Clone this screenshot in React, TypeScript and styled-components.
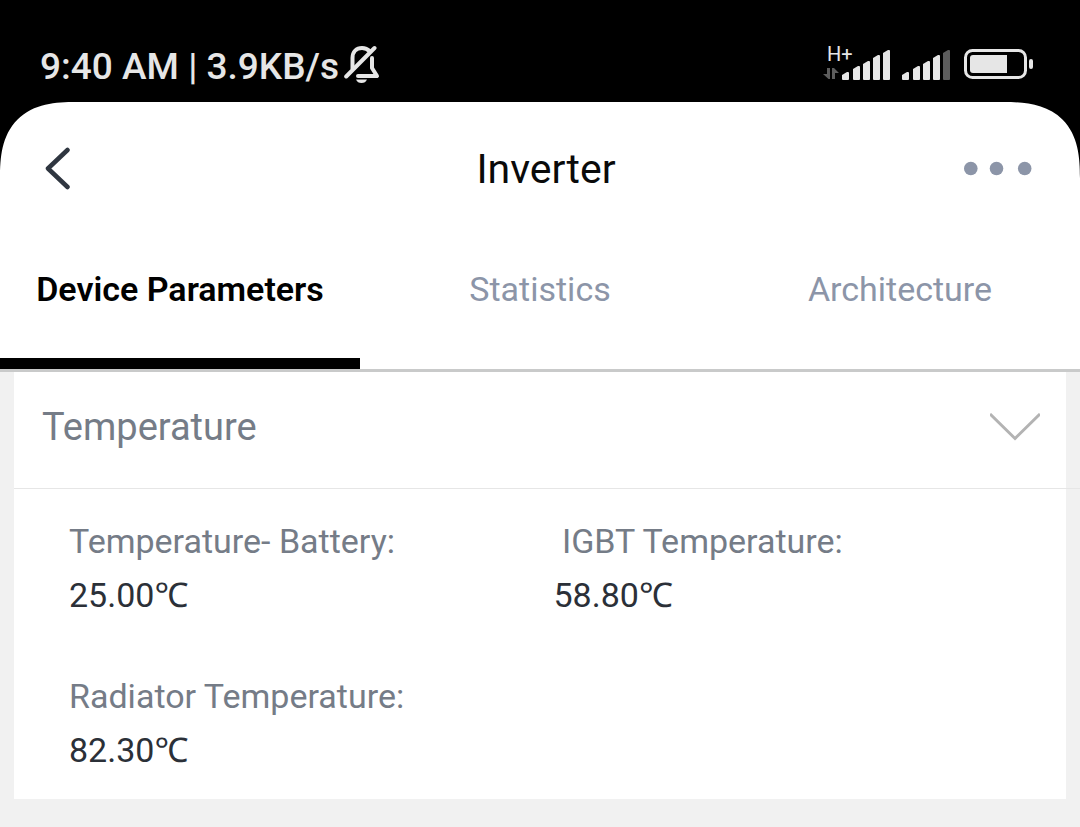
import React, { useState } from "react";
import styled, { createGlobalStyle } from "styled-components";

const GlobalStyle = createGlobalStyle`
  * { box-sizing: border-box; }
  body {
    margin: 0;
    background: #f1f1f1;
    font-family: Roboto, "Noto Sans", sans-serif;
  }
  button {
    font-family: inherit;
    border: 0;
    padding: 0;
    background: none;
    cursor: pointer;
  }
`;

const Screen = styled.div`
  display: flex;
  flex-direction: column;
  min-height: 100vh;
`;

const TopArea = styled.div`
  background: #000;
`;

const StatusBar = styled.div`
  display: flex;
  justify-content: space-between;
  height: 102px;
  padding: 40px 47px 0 40px;
  color: #e6e6e6;
`;

const StatusGroup = styled.div`
  display: flex;
  align-items: flex-start;
`;

const StatusText = styled.span`
  font-size: 37px;
  line-height: 54px;
  font-weight: 500;
  white-space: pre;
`;

const BellIcon = styled.svg`
  margin-left: 5px;
  flex: none;
`;

const AppBar = styled.header`
  display: grid;
  grid-template-columns: 1fr auto 1fr;
  align-items: center;
  height: 134px;
  padding: 0 40px;
  background: #fff;
  border-radius: 76px 76px 0 0;
  corner-shape: superellipse(1.4);
`;

const Title = styled.h1`
  margin: 0;
  padding-left: 12px;
  font-size: 41px;
  line-height: 48px;
  font-weight: 400;
  color: #0a0a0a;
`;

const IconButton = styled.button<{ $end?: boolean }>`
  display: flex;
  justify-self: ${(p) => (p.$end ? "end" : "start")};
`;

const Tabs = styled.nav`
  display: grid;
  grid-template-columns: repeat(3, 1fr);
  background: #fff;
  border-bottom: 3px solid #c9caca;
`;

const Tab = styled.button<{ $active: boolean }>`
  padding: 31px 0 47px;
  border-bottom: 11px solid ${(p) => (p.$active ? "#000" : "transparent")};
  font-size: 34px;
  line-height: 44px;
  font-weight: ${(p) => (p.$active ? 600 : 400)};
  color: ${(p) => (p.$active ? "#000" : "#8c95a8")};
  white-space: nowrap;
`;

const Card = styled.section`
  margin: 0 14px;
  background: #fff;
`;

const SectionToggle = styled.button`
  display: flex;
  align-items: center;
  justify-content: space-between;
  width: 100%;
  height: 116px;
  padding: 0 26px 6px 28px;
  font-size: 38px;
  line-height: 48px;
  color: #757c87;
`;

const Divider = styled.div`
  height: 1px;
  margin-right: -14px;
  background: #e6e6e6;
`;

const Readings = styled.dl`
  display: grid;
  grid-template-columns: 1fr 1fr;
  row-gap: 47px;
  margin: 0;
  padding: 25px 28px 22px 55px;
`;

const Reading = styled.div`
  font-size: 34px;
  line-height: 54px;
  white-space: pre;
`;

const Label = styled.dt`
  color: #757c87;
`;

const Value = styled.dd`
  margin: 0;
  color: #2b3038;
`;

const TABS = ["Device Parameters", "Statistics", "Architecture"];

const READINGS = [
  { label: "Temperature- Battery:", value: "25.00℃" },
  { label: " IGBT Temperature:", value: "58.80℃" },
  { label: "Radiator Temperature:", value: "82.30℃" },
];

const BAR_TOPS = [32, 26, 21, 15, 10];
const BAR_OFFSETS = [0, 11, 21, 31, 41];

const bar = (x: number, top: number) =>
  `M${x} ${top + 3}L${x + 5} ${top}H${x + 6}Q${x + 7} ${top} ${x + 7} ${top + 1}V39Q${x + 7} 40 ${x + 6} 40H${x + 1}Q${x} 40 ${x} 39Z`;

function SignalBars({ x, level }: { x: number; level: number }) {
  return (
    <>
      {BAR_OFFSETS.map((dx, i) => (
        <path key={dx} d={bar(x + dx, BAR_TOPS[i])} fill={i < level ? "#e6e6e6" : "#5c5c5c"} />
      ))}
    </>
  );
}

function SystemIcons() {
  return (
    <svg width="210" height="46" viewBox="0 0 210 46" aria-label="Signal and battery">
      <text x="4" y="21" fontSize="20" fill="#e6e6e6">H+</text>
      <path d="M4 28H7V39H5.500L0 34H4ZM9 28H11L16 33H12V39H9Z" fill="#5c5c5c" />
      <SignalBars x={19} level={5} />
      <SignalBars x={79} level={4} />
      <rect x="142.500" y="10.500" width="60" height="27" rx="7" fill="none" stroke="#e6e6e6" strokeWidth="3" />
      <path d="M150 15H184V33H150Q147 33 147 30V18Q147 15 150 15Z" fill="#e6e6e6" />
      <rect x="206" y="19" width="4" height="10" rx="2" fill="#e6e6e6" />
    </svg>
  );
}

export default function App() {
  const [active, setActive] = useState(0);
  const [open, setOpen] = useState(true);
  return (
    <Screen>
      <GlobalStyle />
      <TopArea>
        <StatusBar>
          <StatusGroup>
            <StatusText>9:40 AM | 3.9KB/s</StatusText>
            <BellIcon width="36" height="46" viewBox="0 -4 36 46" fill="none" stroke="#e6e6e6" strokeWidth="4" strokeLinecap="round">
              <path d="M8.500 25V14C8.500 7.500 12.500 4 18 4C21 4 23.500 5 26 7.500" strokeLinecap="butt" />
              <path d="M28 14V24L33 32H14" strokeLinejoin="round" />
              <path d="M2.200 32.500L30.500 4" />
              <path d="M12 35.500H23Q21.500 39 17.500 39Q13.500 39 12 35.500Z" fill="#e6e6e6" stroke="none" />
            </BellIcon>
          </StatusGroup>
          <SystemIcons />
        </StatusBar>
        <AppBar>
          <IconButton aria-label="Back">
            <svg width="36" height="44" viewBox="0 0 36 44" fill="none" stroke="#2f3640" strokeWidth="4.500" strokeLinecap="round" strokeLinejoin="round">
              <path d="M27.500 3L8 21.500L27.500 40" />
            </svg>
          </IconButton>
          <Title>Inverter</Title>
          <IconButton $end aria-label="More options">
            <svg width="76" height="16" viewBox="0 0 76 16" fill="#8c95a8">
              <circle cx="6.800" cy="7.500" r="6.800" />
              <circle cx="32.500" cy="7.500" r="6.800" />
              <circle cx="60.700" cy="7.500" r="6.800" />
            </svg>
          </IconButton>
        </AppBar>
      </TopArea>
      <Tabs>
        {TABS.map((name, i) => (
          <Tab key={name} $active={i === active} onClick={() => setActive(i)}>
            {name}
          </Tab>
        ))}
      </Tabs>
      <Card>
        <SectionToggle aria-expanded={open} onClick={() => setOpen(!open)}>
          Temperature
          <svg width="50" height="28" viewBox="0 0 50 28" fill="none" stroke="#b3b3b3" strokeWidth="3">
            <path d="M0 1L25 25.500L50 1" />
          </svg>
        </SectionToggle>
        <Divider />
        {open && (
          <Readings>
            {READINGS.map((r) => (
              <Reading key={r.label}>
                <Label>{r.label}</Label>
                <Value>{r.value}</Value>
              </Reading>
            ))}
          </Readings>
        )}
      </Card>
    </Screen>
  );
}
